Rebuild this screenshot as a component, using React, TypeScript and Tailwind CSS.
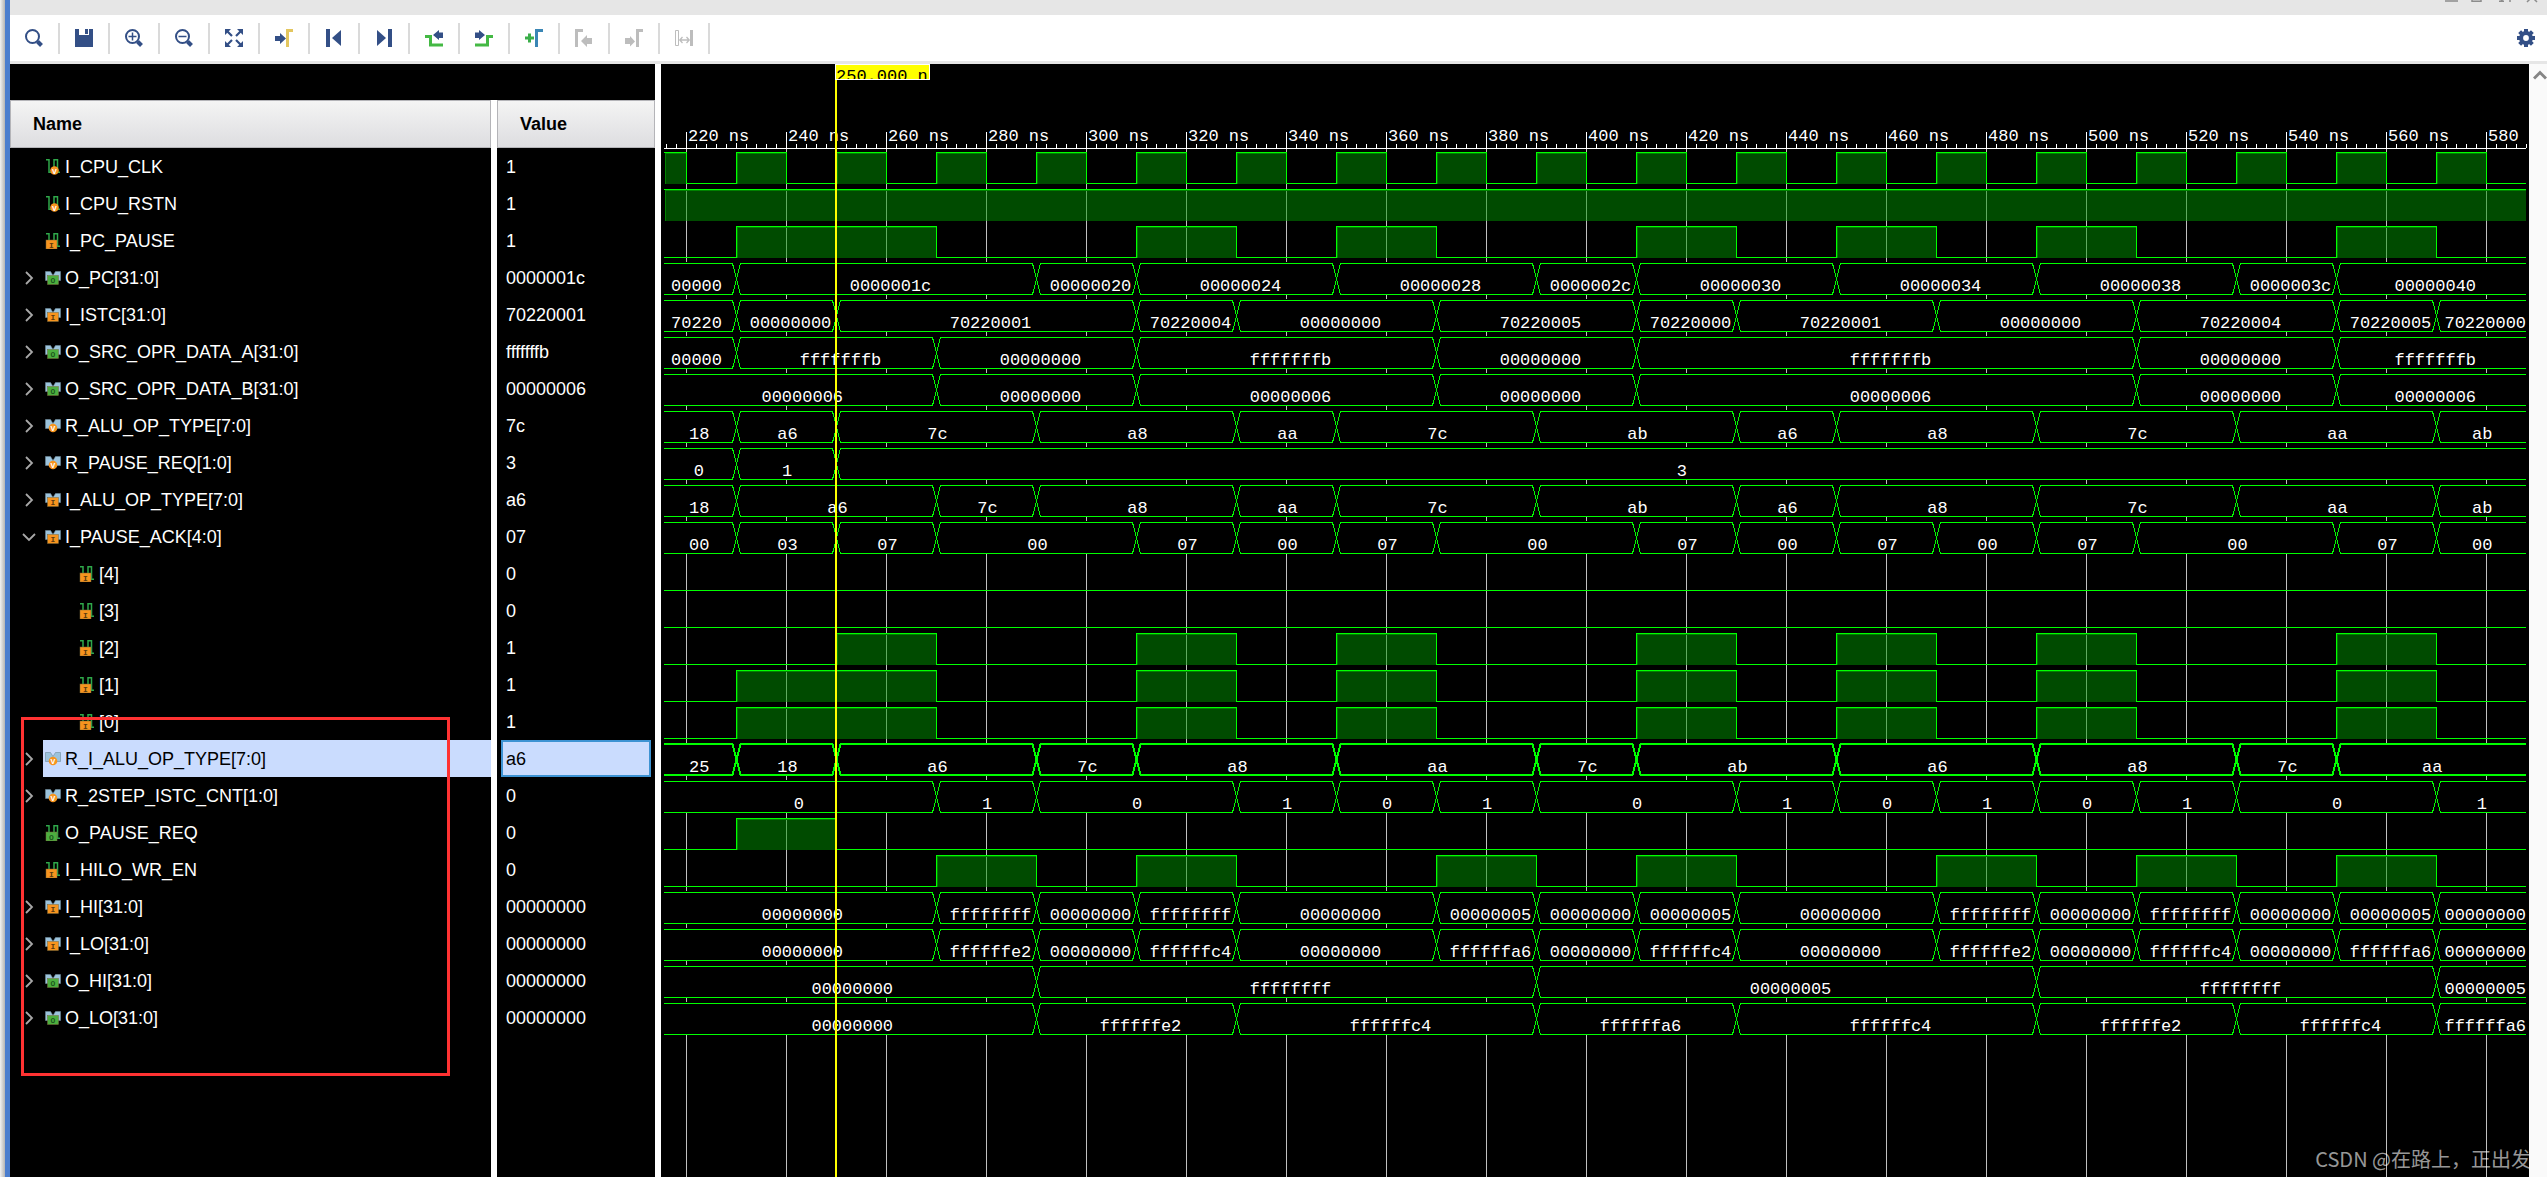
import type { ReactNode } from "react"

type Kind = "net" | "bus"
type Badge = "V" | "I" | "O"

interface Signal {
  name: string
  value: string
  kind: Kind
  badge: Badge
  child?: boolean
  open?: boolean
  selected?: boolean
  // bus rows: [start time, label], net rows: [rise, fall]
  bus?: [number, string][]
  high?: [number, number][]
}

const T0 = 215.6
const T_END = 588
const ROW = 37
const ROWS_TOP = 84

const toX = (t: number) => Math.round(25 + (t - 220) * 5)
const LEFT = toX(T0)
const RIGHT = toX(T_END)

const Z = "00000000"
const F = "ffffffff"

const clock: [number, number][] = [[T0, 220]]
for (let t = 230; t < 580; t += 20) clock.push([t, t + 10])

const pulses: [number, number][] = [
  [310, 330], [350, 370], [410, 430], [450, 470], [490, 510], [550, 570],
]

const signals: Signal[] = [
  { name: "I_CPU_CLK", value: "1", kind: "net", badge: "V", high: clock },
  { name: "I_CPU_RSTN", value: "1", kind: "net", badge: "V", high: [[T0, T_END]] },
  { name: "I_PC_PAUSE", value: "1", kind: "net", badge: "I", high: [[230, 270], ...pulses] },
  {
    name: "O_PC[31:0]", value: "0000001c", kind: "bus", badge: "O",
    bus: [[T0, "00000"], [230, "0000001c"], [290, "00000020"], [310, "00000024"], [350, "00000028"], [390, "0000002c"], [410, "00000030"], [450, "00000034"], [490, "00000038"], [530, "0000003c"], [550, "00000040"]],
  },
  {
    name: "I_ISTC[31:0]", value: "70220001", kind: "bus", badge: "I",
    bus: [[T0, "70220"], [230, Z], [250, "70220001"], [310, "70220004"], [330, Z], [370, "70220005"], [410, "70220000"], [430, "70220001"], [470, Z], [510, "70220004"], [550, "70220005"], [570, "70220000"]],
  },
  {
    name: "O_SRC_OPR_DATA_A[31:0]", value: "fffffffb", kind: "bus", badge: "O",
    bus: [[T0, "00000"], [230, "fffffffb"], [270, Z], [310, "fffffffb"], [370, Z], [410, "fffffffb"], [510, Z], [550, "fffffffb"]],
  },
  {
    name: "O_SRC_OPR_DATA_B[31:0]", value: "00000006", kind: "bus", badge: "O",
    bus: [[T0, "00000006"], [270, Z], [310, "00000006"], [370, Z], [410, "00000006"], [510, Z], [550, "00000006"]],
  },
  {
    name: "R_ALU_OP_TYPE[7:0]", value: "7c", kind: "bus", badge: "V",
    bus: [[T0, "18"], [230, "a6"], [250, "7c"], [290, "a8"], [330, "aa"], [350, "7c"], [390, "ab"], [430, "a6"], [450, "a8"], [490, "7c"], [530, "aa"], [570, "ab"]],
  },
  {
    name: "R_PAUSE_REQ[1:0]", value: "3", kind: "bus", badge: "V",
    bus: [[T0, "0"], [230, "1"], [250, "3"]],
  },
  {
    name: "I_ALU_OP_TYPE[7:0]", value: "a6", kind: "bus", badge: "I",
    bus: [[T0, "18"], [230, "a6"], [270, "7c"], [290, "a8"], [330, "aa"], [350, "7c"], [390, "ab"], [430, "a6"], [450, "a8"], [490, "7c"], [530, "aa"], [570, "ab"]],
  },
  {
    name: "I_PAUSE_ACK[4:0]", value: "07", kind: "bus", badge: "I", open: true,
    bus: [[T0, "00"], [230, "03"], [250, "07"], [270, "00"], [310, "07"], [330, "00"], [350, "07"], [370, "00"], [410, "07"], [430, "00"], [450, "07"], [470, "00"], [490, "07"], [510, "00"], [550, "07"], [570, "00"]],
  },
  { name: "[4]", value: "0", kind: "net", badge: "I", child: true, high: [] },
  { name: "[3]", value: "0", kind: "net", badge: "I", child: true, high: [] },
  { name: "[2]", value: "1", kind: "net", badge: "I", child: true, high: [[250, 270], ...pulses] },
  { name: "[1]", value: "1", kind: "net", badge: "I", child: true, high: [[230, 270], ...pulses] },
  { name: "[0]", value: "1", kind: "net", badge: "I", child: true, high: [[230, 270], ...pulses] },
  {
    name: "R_I_ALU_OP_TYPE[7:0]", value: "a6", kind: "bus", badge: "V", selected: true,
    bus: [[T0, "25"], [230, "18"], [250, "a6"], [290, "7c"], [310, "a8"], [350, "aa"], [390, "7c"], [410, "ab"], [450, "a6"], [490, "a8"], [530, "7c"], [550, "aa"]],
  },
  {
    name: "R_2STEP_ISTC_CNT[1:0]", value: "0", kind: "bus", badge: "V",
    bus: [[T0, "0"], [270, "1"], [290, "0"], [330, "1"], [350, "0"], [370, "1"], [390, "0"], [430, "1"], [450, "0"], [470, "1"], [490, "0"], [510, "1"], [530, "0"], [570, "1"]],
  },
  { name: "O_PAUSE_REQ", value: "0", kind: "net", badge: "O", high: [[230, 250]] },
  {
    name: "I_HILO_WR_EN", value: "0", kind: "net", badge: "I",
    high: [[270, 290], [310, 330], [370, 390], [410, 430], [470, 490], [510, 530], [550, 570]],
  },
  {
    name: "I_HI[31:0]", value: Z, kind: "bus", badge: "I",
    bus: [[T0, Z], [270, F], [290, Z], [310, F], [330, Z], [370, "00000005"], [390, Z], [410, "00000005"], [430, Z], [470, F], [490, Z], [510, F], [530, Z], [550, "00000005"], [570, Z]],
  },
  {
    name: "I_LO[31:0]", value: Z, kind: "bus", badge: "I",
    bus: [[T0, Z], [270, "ffffffe2"], [290, Z], [310, "ffffffc4"], [330, Z], [370, "ffffffa6"], [390, Z], [410, "ffffffc4"], [430, Z], [470, "ffffffe2"], [490, Z], [510, "ffffffc4"], [530, Z], [550, "ffffffa6"], [570, Z]],
  },
  {
    name: "O_HI[31:0]", value: Z, kind: "bus", badge: "O",
    bus: [[T0, Z], [290, F], [390, "00000005"], [490, F], [570, "00000005"]],
  },
  {
    name: "O_LO[31:0]", value: Z, kind: "bus", badge: "O",
    bus: [[T0, Z], [290, "ffffffe2"], [330, "ffffffc4"], [390, "ffffffa6"], [430, "ffffffc4"], [490, "ffffffe2"], [530, "ffffffc4"], [570, "ffffffa6"]],
  },
]

/* ---------- toolbar ---------- */

const NAVY = "#334f86"
const GRAY = "#bdbdbd"

function Lens({ children }: { children?: ReactNode }) {
  return (
    <>
      <circle cx="7.5" cy="7.5" r="6.5" fill="none" stroke={NAVY} strokeWidth="2" />
      <path d="M12.5 12.5l4 4" stroke={NAVY} strokeWidth="4" />
      {children}
    </>
  )
}

const tools: { label: string; icon: ReactNode; disabled?: boolean }[] = [
  { label: "Find", icon: <Lens /> },
  {
    label: "Save",
    icon: <path d="M0 0h4v6h10V0h4v18H0zM10 0h3v5h-3z" fill={NAVY} />,
  },
  {
    label: "Zoom In",
    icon: <Lens><path d="M3.5 7.5h8M7.5 3.5v8" stroke={NAVY} strokeWidth="1.5" /></Lens>,
  },
  {
    label: "Zoom Out",
    icon: <Lens><path d="M3.5 7.5h8" stroke={NAVY} strokeWidth="1.5" /></Lens>,
  },
  {
    label: "Zoom Fit",
    icon: (
      <>
        <path d="M0 0h6L0 6zM18 0v6l-6-6zM0 18v-6l6 6zM18 18h-6l6-6z" fill={NAVY} />
        <path d="M2 2l5 5M16 2l-5 5M2 16l5-5M16 16l-5-5" stroke={NAVY} strokeWidth="2.2" />
      </>
    ),
  },
  {
    label: "Go to Cursor",
    icon: (
      <>
        <path d="M0 7h5V4l6 5.500l-6 5.500v-3H0z" fill={NAVY} />
        <path d="M12.500 18V1.500H18" stroke="#e3c65f" strokeWidth="3" fill="none" />
      </>
    ),
  },
  {
    label: "Go to Time 0",
    icon: <path d="M1 0h4v18H1zM16 1v16L7 9z" fill={NAVY} />,
  },
  {
    label: "Go to Last Time",
    icon: <path d="M13 0h4v18h-4zM2 1v16l9-8z" fill={NAVY} />,
  },
  {
    label: "Previous Transition",
    icon: (
      <>
        <path d="M0 7.500h5.500V16H18" stroke="#44b944" strokeWidth="3" fill="none" />
        <path d="M18 3.500h-4V1L8 6l6 5V9h4z" fill={NAVY} />
      </>
    ),
  },
  {
    label: "Next Transition",
    icon: (
      <>
        <path d="M0 16h12.500V7.500H18" stroke="#44b944" strokeWidth="3" fill="none" />
        <path d="M0 3.500h4V1l6 5l-6 5V9H0z" fill={NAVY} />
      </>
    ),
  },
  {
    label: "Add Marker",
    icon: (
      <>
        <path d="M0 9h9M4.500 4.500v9" stroke="#3aae49" strokeWidth="3" />
        <path d="M11.500 18V1.500H18" stroke="#3a86b5" strokeWidth="3" fill="none" />
      </>
    ),
  },
  {
    label: "Previous Marker",
    disabled: true,
    icon: (
      <>
        <path d="M1.500 18V1.500H8" stroke={GRAY} strokeWidth="3" fill="none" />
        <path d="M17 9h-5V6l-6 6l6 6v-3h5z" fill={GRAY} />
      </>
    ),
  },
  {
    label: "Next Marker",
    disabled: true,
    icon: (
      <>
        <path d="M12.500 18V1.500H18" stroke={GRAY} strokeWidth="3" fill="none" />
        <path d="M0 9h5V7l5 5.500l-5 5V15H0z" fill={GRAY} />
      </>
    ),
  },
  {
    label: "Swap Cursors",
    disabled: true,
    icon: (
      <>
        <path d="M.5 1.500h3v15h-3z" stroke={GRAY} fill="none" />
        <path d="M15 1h3v16h-3z" fill={GRAY} />
        <path d="M5 11h9M7.500 8L4.800 11l2.700 3M11.500 8l2.700 3l-2.700 3" stroke={GRAY} strokeWidth="1.300" fill="none" />
      </>
    ),
  },
]

function Toolbar() {
  return (
    <div className="flex h-[49px] items-center border-b-[3px] border-[#e6e6e6] bg-white">
      {tools.map((tool) => (
        <button
          key={tool.label}
          aria-label={tool.label}
          disabled={tool.disabled}
          className="flex h-[31px] w-[50px] items-center justify-center border-r-2 border-[#dadada]"
        >
          <svg viewBox="0 0 18 18" className="size-[18px]">{tool.icon}</svg>
        </button>
      ))}
      <button aria-label="Settings" className="mr-3 ml-auto">
        <svg viewBox="-9 -9 18 18" className="size-[18px]">
          <circle r="4.900" fill="none" stroke={NAVY} strokeWidth="4" />
          {[0, 45, 90, 135].map((a) => (
            <path key={a} d="M0-9v3M0 6v3" stroke={NAVY} strokeWidth="4" transform={`rotate(${a})`} />
          ))}
        </svg>
      </button>
    </div>
  )
}

/* ---------- name / value columns ---------- */

const badgeFill = { V: "#f7941e", I: "#f7941e", O: "#4caf3f" }
const badgeInk = { V: "#fff", I: "#5a3a10", O: "#1d5a1d" }

function SignalIcon({ kind, badge }: { kind: Kind; badge: Badge }) {
  const cx = kind === "bus" ? 8 : badge === "V" ? 9.5 : 6.5
  const cy = kind === "bus" ? 10 : 11.5
  return (
    <svg viewBox="0 0 16 16" className="size-4 shrink-0">
      {kind === "bus" ? (
        <path d="M.5 1.500h5l2.500 4l2.500-4h5v9h-15z" fill="#9cc3dc" stroke="#6f8c9c" strokeWidth=".6" />
      ) : (
        <path d="M1 .8h3v12.500h3M9 13V.8h3.500v12.500H15" fill="none" stroke="#2fa84a" strokeWidth="1.500" />
      )}
      {badge === "V" ? (
        <circle cx={cx} cy={cy} r="4.300" fill={badgeFill[badge]} />
      ) : (
        <rect x={cx - 5.5} y={cy - 4.5} width="11" height="9" fill={badgeFill[badge]} stroke="#7a6a3a" strokeWidth=".5" />
      )}
      <text
        x={cx}
        y={cy + 3}
        textAnchor="middle"
        fill={badgeInk[badge]}
        className="font-['Liberation_Mono'] text-[8px] font-bold"
      >
        {badge}
      </text>
    </svg>
  )
}

function NameCell({ s }: { s: Signal }) {
  return (
    <div className="flex h-[37px] items-center">
      <div className="flex w-[33px] shrink-0 justify-center pl-1">
        {s.kind === "bus" && (
          <button aria-label={`${s.open ? "Collapse" : "Expand"} ${s.name}`}>
            <svg viewBox="0 0 14 14" className="size-3.5" fill="none" stroke="#a8a8a8" strokeWidth="1.800">
              <path d={s.open ? "M1 4l6 6l6-6" : "M4 1l6 6l-6 6"} />
            </svg>
          </button>
        )}
      </div>
      <div
        className={`flex h-full flex-1 items-center gap-1 ${s.child ? "pl-9" : "pl-0.5"} ${s.selected ? "bg-[#cadcfe] text-black" : ""}`}
      >
        <SignalIcon kind={s.kind} badge={s.badge} />
        <span>{s.name}</span>
      </div>
    </div>
  )
}

const headCell = "h-12 border border-[#b4b4b8] bg-linear-to-b from-[#f4f4f4] to-[#dddde0] p-0 text-left font-bold text-black"

function SignalTable() {
  return (
    <div className="relative flex w-[645px] shrink-0 flex-col bg-black pt-9">
      <table className="h-full w-full table-fixed border-separate border-spacing-0 text-lg leading-6 text-white">
        <colgroup>
          <col />
          <col className="w-1.5" />
          <col className="w-[158px]" />
        </colgroup>
        <thead>
          <tr>
            <th className={headCell}><span className="pl-[22px]">Name</span></th>
            <th className="bg-white p-0" />
            <th className={headCell}><span className="pl-[22px]">Value</span></th>
          </tr>
        </thead>
        <tbody>
          {signals.map((s) => (
            <tr key={s.name} className="h-[37px]">
              <td className="p-0"><NameCell s={s} /></td>
              <td className="bg-white p-0" />
              <td className="p-0">
                <div
                  className={`mx-1 flex h-[37px] items-center border-2 px-[3px] ${s.selected ? "border-[#3d93d3] bg-[#cadcfe] text-black" : "border-transparent"}`}
                >
                  {s.value}
                </div>
              </td>
            </tr>
          ))}
          <tr>
            <td className="p-0" />
            <td className="bg-white p-0" />
            <td className="p-0" />
          </tr>
        </tbody>
      </table>
      {/* highlight box over the newly added signals */}
      <div className="pointer-events-none absolute top-[653px] left-[11px] h-[359px] w-[429px] border-3 border-[#ff3232]" />
    </div>
  )
}

/* ---------- waveform ---------- */

function NetWave({ s, top }: { s: Signal; top: number }) {
  const hi = top + 4.5
  const lo = top + 35.5
  let d = `M${LEFT} ${lo}`
  for (const [a, b] of s.high ?? []) {
    const x1 = toX(a) + 0.5
    const x2 = toX(b) + 0.5
    d += a === T0 ? `M${LEFT} ${hi}` : `H${x1}V${hi}`
    d += b === T_END ? `H${RIGHT}` : `H${x2}V${lo}`
  }
  if (s.high?.at(-1)?.[1] !== T_END) d += `H${RIGHT}`
  return (
    <g>
      {s.high?.map(([a, b]) => (
        <g key={a}>
          <rect x={toX(a) + 1} y={top + 5} width={toX(b) - toX(a) - 1} height="31" fill="#009600" fillOpacity=".5" />
          <path d={`M${toX(a) + 1.5} ${top + 36}V${top + 5.5}H${toX(b)}`} fill="none" stroke="#008200" />
        </g>
      ))}
      <path d={d} fill="none" stroke="#00ff00" />
    </g>
  )
}

function BusWave({ s, top }: { s: Signal; top: number }) {
  const segs = s.bus ?? []
  const hi = top + (s.selected ? 4 : 4.5)
  const lo = top + (s.selected ? 35 : 35.5)
  const mid = (hi + lo) / 2
  return (
    <g>
      <rect x={LEFT} y={top + 3} width={RIGHT - LEFT} height="33" fill="#000" />
      {segs.map(([t, label], i) => {
        const first = i === 0
        const last = i === segs.length - 1
        const x1 = toX(t) + (first ? 0 : 0.5)
        const x2 = last ? RIGHT : toX(segs[i + 1][0]) + 0.5
        const start = first ? "" : `${x1} ${mid}L`
        const end = last ? "" : `L${x2} ${mid}`
        const a = first ? x1 : x1 + 4
        const b = last ? x2 : x2 - 4
        const d = `M${start}${a} ${hi}L${b} ${hi}${end}M${start}${a} ${lo}L${b} ${lo}${end}`
        const cut = first && label.length === 5
        return (
          <g key={t}>
            <path d={d} fill="none" stroke="#00ff00" strokeWidth={s.selected ? 2 : 1} />
            <text
              x={cut ? LEFT + 7 : (x1 + x2) / 2 + label.length / 2 - (first ? 2 : 0)}
              y={top + 32}
              textAnchor={cut ? "start" : "middle"}
              fill="#fff"
            >
              {label}
            </text>
          </g>
        )
      })}
    </g>
  )
}

function Ruler() {
  const ticks: number[] = []
  for (let t = 216; t <= T_END; t += 2) ticks.push(t)
  return (
    <g>
      <path d={`M${LEFT} 84.5H${RIGHT}`} stroke="#fff" />
      {ticks.map((t) => (
        <path
          key={t}
          d={`M${toX(t) + 0.5} ${t % 20 === 0 ? 68 : t % 10 === 0 ? 79 : 80}V84`}
          stroke="#fff"
        />
      ))}
      {ticks.filter((t) => t % 20 === 0).map((t) => (
        <text key={t} x={toX(t) + 2} y="77" fill="#fff">{t} ns</text>
      ))}
    </g>
  )
}

function Waveform() {
  const grid: number[] = []
  for (let t = 220; t < T_END; t += 20) grid.push(t)
  return (
    <div className="relative min-w-0 flex-1 overflow-hidden border-l-6 border-white bg-black">
      <svg className="absolute inset-0 h-full w-full font-['Liberation_Mono',monospace] text-[17px]" shapeRendering="crispEdges">
        {grid.map((t) => (
          <rect key={t} x={toX(t)} y="85" width="1" height="100%" fill="#c0c0c0" />
        ))}
        {signals.map((s, i) => {
          const top = ROWS_TOP + i * ROW
          return s.kind === "bus" ? <BusWave key={s.name} s={s} top={top} /> : <NetWave key={s.name} s={s} top={top} />
        })}
        <Ruler />
        <rect x="174" y="0" width="2" height="100%" fill="#ffff00" />
      </svg>
      <div className="absolute top-0 left-[174px] flex h-4 w-[95px] overflow-hidden border border-white bg-[#ffff00] pt-0.5 font-['Liberation_Mono',monospace] text-[17px] leading-5 whitespace-nowrap text-black">
        250.000 ns
      </div>
    </div>
  )
}

export default function App() {
  return (
    <div className="flex h-screen overflow-hidden bg-white font-['Liberation_Sans',Arial,sans-serif]">
      <div className="w-[5px] shrink-0 bg-linear-to-r from-[#f2f2f2] to-[#b4b4b4]" />
      <div className="w-[5px] shrink-0 bg-[#4a7dce]" />
      <div className="flex min-w-0 flex-1 flex-col">
        <div className="flex h-[15px] justify-end bg-[#e6e6e6] pr-2">
          <svg viewBox="0 0 94 3" className="h-[3px] w-[94px]" fill="none" stroke="#8c8c8c" strokeWidth="1.500">
            <path d="M0 1h13M27-4v5.200h9V-4M54 1.200h5M56 1l6-6M64 1h2M82 2l5-5l5 5" />
          </svg>
        </div>
        <Toolbar />
        <div className="flex min-h-0 flex-1">
          <SignalTable />
          <Waveform />
          <div className="flex w-[18px] shrink-0 justify-end overflow-hidden bg-[#fafafa] pt-1.5">
            <svg viewBox="0 0 14 10" className="h-2.5 w-3.5" fill="none" stroke="#858585" strokeWidth="3">
              <path d="M1 8.500l6-6l6 6" />
            </svg>
          </div>
        </div>
      </div>
      <p className="pointer-events-none absolute right-4 bottom-1 font-['Noto_Sans_CJK_SC',sans-serif] text-xl leading-7 text-white/60">
        CSDN @在路上，正出发
      </p>
    </div>
  )
}
